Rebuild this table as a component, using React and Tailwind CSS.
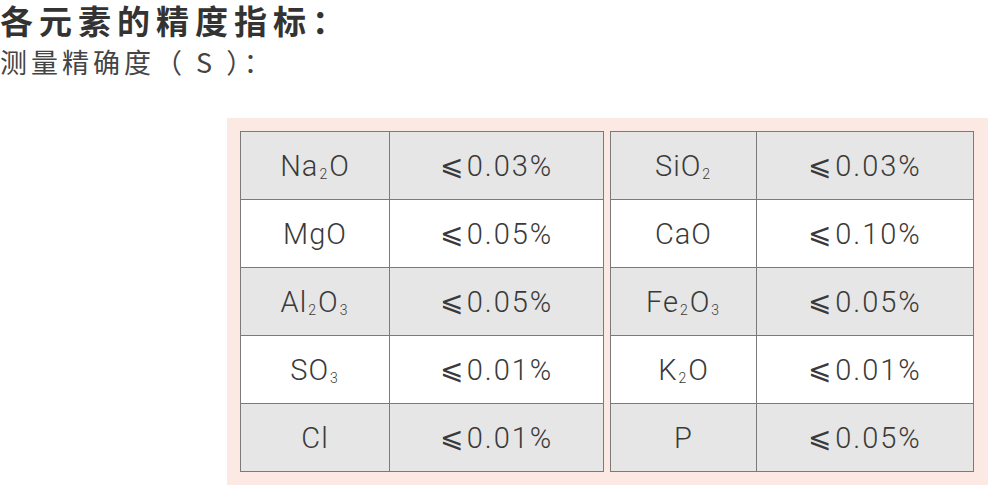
const left = [
  [["Na", "2", "O"], "0.03%"],
  [["MgO"], "0.05%"],
  [["Al", "2", "O", "3"], "0.05%"],
  [["SO", "3"], "0.01%"],
  [["Cl"], "0.01%"],
];

const right = [
  [["SiO", "2"], "0.03%"],
  [["CaO"], "0.10%"],
  [["Fe", "2", "O", "3"], "0.05%"],
  [["K", "2", "O"], "0.01%"],
  [["P"], "0.05%"],
];

// parts alternate: normal, subscript, normal, subscript...
function Formula({ parts }) {
  return (
    <span className="tracking-[1px]">
      {parts.map((p, i) =>
        i % 2 === 1 ? (
          <sub key={i} className="text-[14px] relative top-[3px] mx-[1px]">
            {p}
          </sub>
        ) : (
          <span key={i}>{p}</span>
        )
      )}
    </span>
  );
}

function Table({ rows, firstCol, secondCol }) {
  return (
    <div className="border border-[#7a7a7a] flex flex-col">
      {rows.map(([f, v], i) => (
        <div
          key={i}
          className={`flex ${i < rows.length - 1 ? "h-[68px] border-b border-[#7a7a7a]" : "h-[67px]"} ${i % 2 === 0 ? "bg-[#e6e6e6]" : "bg-white"}`}
        >
          <div className={`${firstCol} flex items-center justify-center pt-[3px] border-r border-[#7a7a7a]`}>
            <Formula parts={f} />
          </div>
          <div className={`${secondCol} flex items-center justify-center pt-[3px]`}>
            <span className="text-[28px] mr-[4px] relative top-[-1px]">⩽</span>
            <span className="tracking-[2px]">{v}</span>
          </div>
        </div>
      ))}
    </div>
  );
}

export default function App() {
  return (
    <div className="w-[988px] h-[485px] bg-white overflow-hidden font-['Noto_Sans_CJK_SC',sans-serif]">
      <h1 className="pt-[1px] text-[33px] leading-[38px] font-bold text-[#333] tracking-[6px] whitespace-nowrap">各元素的精度指标：</h1>
      <p className="mt-[7px] text-[27px] leading-[32px] text-[#444] tracking-[4px] whitespace-nowrap">测量精确度（ S ）：</p>

      <div className="mt-[40px] ml-[227px] w-[761px] h-[367px] bg-[#fce9e3] pl-[13px] pt-[13px]">
        <div className="flex gap-[6px] text-[#3a3a3a] text-[29px] font-light font-['Roboto',sans-serif]">
          <Table rows={left} firstCol="w-[149px]" secondCol="w-[213px]" />
          <Table rows={right} firstCol="w-[146px]" secondCol="w-[216px]" />
        </div>
      </div>
    </div>
  );
}
